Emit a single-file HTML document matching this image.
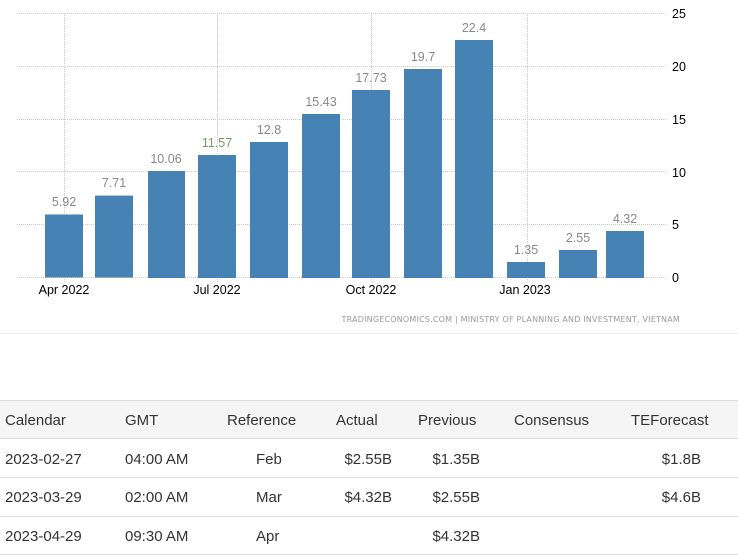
<!DOCTYPE html>
<html><head><meta charset="utf-8"><style>
body{margin:0;width:738px;height:555px;background:#fff;overflow:hidden;position:relative;font-family:"Liberation Sans",Arial,sans-serif}
svg{position:absolute;left:0;top:0}
.t{position:absolute;font-size:15px;color:#333;white-space:nowrap;line-height:18px}
.r{text-align:right}
</style></head><body>
<svg width="738" height="340" font-family="Liberation Sans, Arial, sans-serif">
<g stroke="#ccc" stroke-dasharray="1,1" stroke-width="1">
<line x1="17" y1="13.5" x2="666" y2="13.5"/><line x1="17" y1="66.5" x2="666" y2="66.5"/>
<line x1="17" y1="119.5" x2="666" y2="119.5"/><line x1="17" y1="171.5" x2="666" y2="171.5"/>
<line x1="17" y1="224.5" x2="666" y2="224.5"/><line x1="17" y1="277.5" x2="666" y2="277.5"/>
<line x1="64.5" y1="13" x2="64.5" y2="282"/><line x1="217.5" y1="13" x2="217.5" y2="282"/>
<line x1="371.5" y1="13" x2="371.5" y2="282"/><line x1="527.5" y1="13" x2="527.5" y2="282"/>
</g>
<g fill="#4682b4">
<rect x="45" y="214.5" width="38" height="63"/>
<rect x="95" y="195.6" width="38" height="82"/>
<rect x="148" y="171" width="37" height="107"/>
<rect x="198" y="155" width="38" height="123"/>
<rect x="250" y="142" width="38" height="136"/>
<rect x="302" y="114" width="38" height="164"/>
<rect x="352" y="90" width="38" height="188"/>
<rect x="404" y="69" width="38" height="209"/>
<rect x="455" y="40" width="38" height="238"/>
<rect x="507" y="262" width="38" height="16"/>
<rect x="559" y="250" width="38" height="28"/>
<rect x="606" y="231" width="38" height="47"/>
</g>
<g fill="#888" font-size="12.5" text-anchor="middle">
<text x="64" y="206">5.92</text><text x="114" y="187">7.71</text>
<text x="166" y="163">10.06</text><text x="217" y="147" fill="#7a9a6a">11.57</text>
<text x="269" y="134">12.8</text><text x="321" y="106">15.43</text>
<text x="371" y="82">17.73</text><text x="423" y="61">19.7</text>
<text x="474" y="32">22.4</text><text x="526" y="254">1.35</text>
<text x="578" y="242">2.55</text><text x="625" y="223">4.32</text>
</g>
<g fill="#000" font-size="12.5">
<text x="672" y="18">25</text><text x="672" y="71">20</text><text x="672" y="124">15</text>
<text x="672" y="177">10</text><text x="672" y="229">5</text><text x="672" y="282">0</text>
<text x="64" y="294" text-anchor="middle">Apr 2022</text>
<text x="217" y="294" text-anchor="middle">Jul 2022</text>
<text x="371" y="294" text-anchor="middle">Oct 2022</text>
<text x="525" y="294" text-anchor="middle">Jan 2023</text>
</g>
<text x="680" y="322" text-anchor="end" fill="#999" font-family="DejaVu Sans, sans-serif" font-size="8" letter-spacing="0.2">TRADINGECONOMICS.COM | MINISTRY OF PLANNING AND INVESTMENT, VIETNAM</text>
<line x1="0" y1="333.5" x2="738" y2="333.5" stroke="#eee"/>
</svg>
<div style="position:absolute;left:0;top:400px;width:738px;height:39px;background:#f5f5f5;border-top:1px solid #ddd;border-bottom:1px solid #ddd;box-sizing:border-box"></div>
<div style="position:absolute;left:0;top:477px;width:738px;height:1px;background:#ddd"></div>
<div style="position:absolute;left:0;top:516px;width:738px;height:1px;background:#ddd"></div>
<div style="position:absolute;left:0;top:554px;width:738px;height:1px;background:#ddd"></div>

<div class="t" style="left:5px;top:412px">Calendar</div>
<div class="t" style="left:125px;top:412px">GMT</div>
<div class="t" style="left:227px;top:412px">Reference</div>
<div class="t" style="left:336px;top:412px">Actual</div>
<div class="t" style="left:418px;top:412px">Previous</div>
<div class="t" style="left:514px;top:412px">Consensus</div>
<div class="t" style="left:631px;top:412px">TEForecast</div>

<div class="t" style="left:5px;top:451px">2023-02-27</div>
<div class="t" style="left:125px;top:451px">04:00 AM</div>
<div class="t" style="left:256px;top:451px">Feb</div>
<div class="t r" style="right:346px;top:451px">$2.55B</div>
<div class="t r" style="right:258px;top:451px">$1.35B</div>
<div class="t r" style="right:37px;top:451px">$1.8B</div>

<div class="t" style="left:5px;top:489px">2023-03-29</div>
<div class="t" style="left:125px;top:489px">02:00 AM</div>
<div class="t" style="left:256px;top:489px">Mar</div>
<div class="t r" style="right:346px;top:489px">$4.32B</div>
<div class="t r" style="right:258px;top:489px">$2.55B</div>
<div class="t r" style="right:37px;top:489px">$4.6B</div>

<div class="t" style="left:5px;top:528px">2023-04-29</div>
<div class="t" style="left:125px;top:528px">09:30 AM</div>
<div class="t" style="left:256px;top:528px">Apr</div>
<div class="t r" style="right:258px;top:528px">$4.32B</div>
</body></html>
